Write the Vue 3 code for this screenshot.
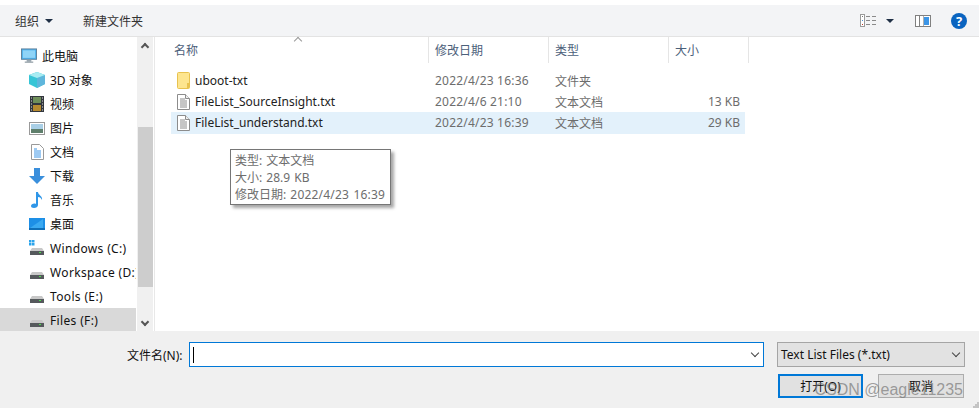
<template>
  <div class="dialog">
    <div class="toolbar">
      <span class="tool-btn">组织</span>
      <span class="caret organize-caret"></span>
      <span class="tool-btn new-folder">新建文件夹</span>
      <span class="spacer"></span>
      <svg class="view-icon" width="17" height="13" viewBox="0 0 17 13">
        <rect x="0.5" y="0.5" width="4" height="12" fill="#fff" stroke="#9a9a9a" />
        <rect x="2" y="2" width="1" height="1" fill="#777" />
        <rect x="2" y="6" width="1" height="1" fill="#4a90d9" />
        <rect x="2" y="10" width="1" height="1" fill="#c0392b" />
        <path d="M6 2.5h4M12 2.5h4M6 6.5h4M12 6.5h4M6 10.5h4M12 10.5h4" stroke="#8a8a8a" stroke-width="1" />
      </svg>
      <span class="caret view-caret"></span>
      <svg class="pane-icon" width="16" height="12" viewBox="0 0 16 12">
        <rect x="0.5" y="0.5" width="15" height="11" fill="#fff" stroke="#808080" />
        <rect x="4" y="1" width="1" height="10" fill="#808080" />
        <rect x="9" y="2" width="5" height="8" fill="#3c95e6" />
        <rect x="8" y="1" width="1" height="10" fill="#b0b0b0" />
      </svg>
      <span class="help">?</span>
    </div>

    <div class="middle">
      <div class="nav">
        <div class="nav-list">
          <div v-for="item in navItems" :key="item.label" class="nav-row" :class="{ active: item.active, root: item.root, drive: item.icon === 'win' || item.icon === 'drive' }">
            <span class="nav-icon">
              <svg v-if="item.icon === 'pc'" width="17" height="16" viewBox="0 0 17 16">
                <rect x="0.5" y="0.5" width="16" height="11" fill="#4db2ee" stroke="#5c7f99" />
                <rect x="2" y="2" width="13" height="8" fill="#8fd4f7" />
                <rect x="6" y="12" width="5" height="2" fill="#9aa7b0" />
                <rect x="4" y="14" width="9" height="1" fill="#6f7f8a" />
              </svg>
              <svg v-else-if="item.icon === 'cube'" width="16" height="16" viewBox="0 0 16 16">
                <path d="M8 0l8 3v9l-8 4-8-4V3z" fill="#37c5d6" />
                <path d="M8 6l8-3v9l-8 4z" fill="#5fb6dc" />
                <path d="M0 3l8-3 8 3-8 3z" fill="#a9ecf2" />
              </svg>
              <svg v-else-if="item.icon === 'video'" width="14" height="16" viewBox="0 0 14 16">
                <rect width="14" height="16" fill="#33373d" />
                <rect x="3" y="1" width="8" height="6" fill="#6f8f5a" />
                <rect x="3" y="9" width="8" height="6" fill="#b78a2f" />
                <path d="M1 2h1M1 5h1M1 8h1M1 11h1M1 14h1M12 2h1M12 5h1M12 8h1M12 11h1M12 14h1" stroke="#ddd" />
              </svg>
              <svg v-else-if="item.icon === 'pic'" width="16" height="13" viewBox="0 0 16 13">
                <rect x="0.5" y="0.5" width="15" height="12" fill="#fff" stroke="#999" />
                <rect x="2" y="2" width="12" height="5" fill="#a9cfe6" />
                <rect x="2" y="7" width="12" height="4" fill="#5f7f6c" />
              </svg>
              <svg v-else-if="item.icon === 'doc'" width="13" height="16" viewBox="0 0 13 16">
                <path d="M0.5 0.5h8l4 4v11h-12z" fill="#fff" stroke="#9a9a9a" />
                <path d="M3 5h3M3 7h7M3 9h7M3 11h7M3 13h7" stroke="#3c95e6" />
              </svg>
              <svg v-else-if="item.icon === 'down'" width="16" height="16" viewBox="0 0 16 16">
                <path d="M5 0h6v8h5l-8 8-8-8h5z" fill="#3a8fdc" />
              </svg>
              <svg v-else-if="item.icon === 'music'" width="12" height="16" viewBox="0 0 12 16">
                <path d="M5 0h2c0 3 5 4 4 8-1-2-2-3-4-3v8c0 2-2 3-4 3s-3-1-3-2c0-2 3-3 5-2z" fill="#2f96e8" />
              </svg>
              <svg v-else-if="item.icon === 'desk'" width="16" height="12" viewBox="0 0 16 12">
                <rect width="16" height="12" fill="#1d8fe6" />
                <path d="M1 10L14 1v9z" fill="#3aa9f1" />
                <rect y="10" width="16" height="2" fill="#0f6fb8" />
              </svg>
              <svg v-else width="16" height="16" viewBox="0 0 16 16">
                <template v-if="item.icon === 'win'">
                  <rect x="0" y="0" width="2.5" height="2.5" fill="#2aa4ec" />
                  <rect x="3" y="0" width="2.5" height="2.5" fill="#2aa4ec" />
                  <rect x="0" y="3" width="2.5" height="2.5" fill="#2aa4ec" />
                  <rect x="3" y="3" width="2.5" height="2.5" fill="#2aa4ec" />
                </template>
                <path d="M3 8h10l2 3H1z" fill="#c8c8c8" />
                <rect x="1" y="11" width="14" height="4" fill="#55595c" />
                <rect x="10" y="12" width="2" height="1" fill="#4ee04e" />
              </svg>
            </span>
            <span class="nav-text">{{ item.label }}</span>
          </div>
        </div>
        <div class="nav-scroll">
          <span class="scroll-up"></span>
          <span class="scroll-thumb"></span>
          <span class="scroll-down"></span>
        </div>
      </div>

      <div class="files">
        <div class="sort-mark"></div>
        <div class="head">
          <div class="col name">名称</div>
          <div class="col date">修改日期</div>
          <div class="col type">类型</div>
          <div class="col size">大小</div>
        </div>
        <div class="rows">
          <div v-for="f in files" :key="f.name" class="row" :class="{ selected: f.selected }">
            <div class="col name">
              <svg v-if="f.folder" class="file-icon" width="13" height="17" viewBox="0 0 13 17">
                <rect x="0.5" y="0.5" width="12" height="16" rx="1" fill="#fde58f" stroke="#e8c24f" />
                <rect x="10" y="11" width="2" height="5" fill="#e8c24f" />
              </svg>
              <svg v-else class="file-icon" width="13" height="16" viewBox="0 0 13 16">
                <path d="M0.5 0.5h8l4 4v11h-12z" fill="#fff" stroke="#8c8c8c" />
                <path d="M8.5 0.5v4h4" fill="#eee" stroke="#8c8c8c" />
                <path d="M3 5h5M3 7h7M3 9h7M3 11h7M3 13h7" stroke="#8c8c8c" />
              </svg>
              <span class="file-name">{{ f.name }}</span>
            </div>
            <div class="col date">{{ f.date }}</div>
            <div class="col type">{{ f.type }}</div>
            <div class="col size">{{ f.size }}</div>
          </div>
        </div>
        <div class="tip">
          <div>类型: 文本文档</div>
          <div>大小: 28.9 KB</div>
          <div>修改日期: <span class="stamp">2022/4/23 16:39</span></div>
        </div>
      </div>
    </div>

    <div class="bottom">
      <div class="line-one">
        <label class="file-label">文件名(N):</label>
        <div class="name-input">
          <span class="cursor"></span>
          <span class="chevron"></span>
        </div>
        <div class="filter">
          <span>Text List Files (*.txt)</span>
          <span class="chevron dark"></span>
        </div>
      </div>
      <div class="line-two">
        <button class="btn primary">打开(O)</button>
        <button class="btn">取消</button>
      </div>
      <div class="watermark">CSDN @eagle11235</div>
      <svg class="grip" width="6" height="6" viewBox="0 0 6 6">
        <path d="M4 0h2v2H4zM2 2h2v2H2zM4 2h2v2H4zM0 4h2v2H0zM2 4h2v2H2zM4 4h2v2H4z" fill="#c4c4c4" />
      </svg>
    </div>
  </div>
</template>

<script setup>
const navItems = [
  { label: '此电脑', icon: 'pc', root: true },
  { label: '3D 对象', icon: 'cube' },
  { label: '视频', icon: 'video' },
  { label: '图片', icon: 'pic' },
  { label: '文档', icon: 'doc' },
  { label: '下载', icon: 'down' },
  { label: '音乐', icon: 'music' },
  { label: '桌面', icon: 'desk' },
  { label: 'Windows (C:)', icon: 'win' },
  { label: 'Workspace (D:)', icon: 'drive' },
  { label: 'Tools (E:)', icon: 'drive' },
  { label: 'Files (F:)', icon: 'drive', active: true }
]

const files = [
  { name: 'uboot-txt', date: '2022/4/23 16:36', type: '文件夹', size: '', folder: true },
  { name: 'FileList_SourceInsight.txt', date: '2022/4/6 21:10', type: '文本文档', size: '13 KB' },
  { name: 'FileList_understand.txt', date: '2022/4/23 16:39', type: '文本文档', size: '29 KB', selected: true }
]
</script>

<style>
html, body {
  margin: 0;
  background: #fff;
}
</style>

<style scoped>
.dialog {
  width: 979px;
  height: 408px;
  overflow: hidden;
  display: flex;
  flex-direction: column;
  font-family: "Noto Sans", "Noto Sans CJK SC", sans-serif;
  font-size: 12px;
  color: #111;
  background: #fff;
  padding-top: 5px;
  box-sizing: border-box;
}

.toolbar {
  height: 32px;
  box-sizing: border-box;
  flex: none;
  display: flex;
  align-items: center;
  background: #f3f4f6;
  border-bottom: 1px solid #e3e3e3;
  padding: 0 12px 0 15px;
  color: #333;
}

.caret {
  width: 0;
  height: 0;
  border-left: 4px solid transparent;
  border-right: 4px solid transparent;
  border-top: 4px solid #1f2f45;
}

.organize-caret {
  margin-left: 6px;
}

.new-folder {
  margin-left: 30px;
}

.spacer {
  flex: 1;
}

.view-caret {
  margin-left: 9px;
}

.pane-icon {
  margin-left: 21px;
}

.help {
  width: 16px;
  height: 16px;
  margin-left: 20px;
  border-radius: 50%;
  background: #0a64c0;
  color: #fff;
  font-weight: 700;
  font-size: 13px;
  line-height: 16px;
  text-align: center;
}

.middle {
  flex: 1;
  min-height: 0;
  display: flex;
}

.nav {
  width: 155px;
  flex: none;
  display: flex;
  border-right: 1px solid #e8e8e8;
  box-sizing: border-box;
}

.nav-list {
  width: 137px;
  flex: none;
  padding-top: 7px;
  overflow: hidden;
}

.nav-row {
  width: 136px;
  height: 24px;
  display: flex;
  align-items: center;
  padding-left: 29px;
  box-sizing: border-box;
  white-space: nowrap;
  overflow: hidden;
}

.nav-row.root {
  padding-left: 21px;
}

.nav-row.drive {
  letter-spacing: 0.35px;
}

.nav-row.active {
  background: #d9d9d9;
}

.nav-icon {
  width: 16px;
  height: 16px;
  flex: none;
  display: flex;
  align-items: center;
  justify-content: center;
}

.nav-text {
  margin-left: 5px;
}

.nav-scroll {
  width: 16px;
  flex: none;
  background: #f0f0f0;
  display: flex;
  flex-direction: column;
  align-items: center;
}

.scroll-up,
.scroll-down {
  width: 6px;
  height: 6px;
  flex: none;
  border-left: 2px solid #555;
  border-top: 2px solid #555;
  box-sizing: border-box;
  transform: rotate(45deg);
  margin: 7px 0 4px;
}

.scroll-down {
  transform: rotate(225deg);
  margin: 32px 0 0;
}

.scroll-thumb {
  width: 15px;
  height: 160px;
  margin-top: 73px;
  flex: none;
  background: #cdcdcd;
}

.files {
  flex: 1;
  position: relative;
  padding-left: 16px;
}

.sort-mark {
  position: absolute;
  left: 140px;
  top: 1px;
  width: 5px;
  height: 5px;
  border-left: 1px solid #999;
  border-top: 1px solid #999;
  transform: rotate(45deg);
}

.head {
  display: flex;
  height: 33px;
  color: #4c607a;
}

.head .col {
  display: flex;
  align-items: center;
  height: 26px;
  padding-left: 6px;
  border-right: 1px solid #e5e5e5;
}

.head .col.name {
  padding-left: 3px;
}

.col {
  box-sizing: border-box;
  flex: none;
  white-space: nowrap;
}

.col.name {
  width: 258px;
}

.col.date {
  width: 120px;
}

.col.type {
  width: 120px;
}

.col.size {
  width: 80px;
}

.rows {
  width: 574px;
}

.row {
  height: 21px;
  display: flex;
  align-items: center;
  color: #6d6d6d;
}

.row .col.name {
  color: #222;
  display: flex;
  align-items: center;
  padding-left: 6px;
}

.row .col.date,
.row .col.type {
  padding-left: 6px;
}

.row .col.date {
  letter-spacing: 0.2px;
}

.row .col.size {
  width: 76px;
  text-align: right;
  padding-right: 5px;
}

.row.selected {
  height: 22px;
  padding-bottom: 1px;
  box-sizing: border-box;
  background: #e3f1fb;
}

.file-name {
  margin-left: 5px;
}

.tip {
  position: absolute;
  left: 75px;
  top: 112px;
  width: 161px;
  height: 56px;
  box-sizing: border-box;
  padding: 2px 0 0 4px;
  border: 1px solid #767676;
  background: #fff;
  color: #6d6d6d;
  line-height: 17px;
  word-spacing: 1px;
  white-space: nowrap;
  box-shadow: 3px 3px 3px rgba(0, 0, 0, 0.35);
}

.stamp {
  letter-spacing: 0.2px;
}

.bottom {
  height: 77px;
  flex: none;
  background: #f0f0f0;
  position: relative;
}

.line-one {
  display: flex;
  align-items: center;
  padding: 11px 0 0 127px;
}

.file-label {
  width: 62px;
  flex: none;
}

.name-input {
  width: 575px;
  height: 25px;
  flex: none;
  box-sizing: border-box;
  border: 1px solid #0078d7;
  background: #fff;
  display: flex;
  align-items: center;
  justify-content: space-between;
  padding: 0 5px 0 3px;
}

.cursor {
  width: 1px;
  height: 16px;
  background: #000;
}

.chevron {
  width: 5px;
  height: 5px;
  border-right: 1px solid #444;
  border-bottom: 1px solid #444;
  transform: rotate(45deg);
  margin-top: -4px;
}

.filter {
  width: 188px;
  height: 25px;
  margin-left: 13px;
  flex: none;
  box-sizing: border-box;
  border: 1px solid #a5a5a5;
  background: #e2e2e2;
  display: flex;
  align-items: center;
  justify-content: space-between;
  padding: 0 5px 0 3px;
}

.line-two {
  display: flex;
  gap: 15px;
  padding: 7px 0 0 778px;
}

.btn {
  width: 86px;
  height: 24px;
  box-sizing: border-box;
  border: 1px solid #adadad;
  background: #e1e1e1;
  font: inherit;
  color: #111;
  padding: 0;
}

.btn.primary {
  width: 85px;
  border: 2px solid #0078d7;
}

.watermark {
  position: absolute;
  right: 16px;
  bottom: 9px;
  font-family: "Liberation Sans", sans-serif;
  font-size: 16px;
  color: rgba(120, 120, 120, 0.7);
}

.grip {
  position: absolute;
  right: 0;
  bottom: 0;
}
</style>
